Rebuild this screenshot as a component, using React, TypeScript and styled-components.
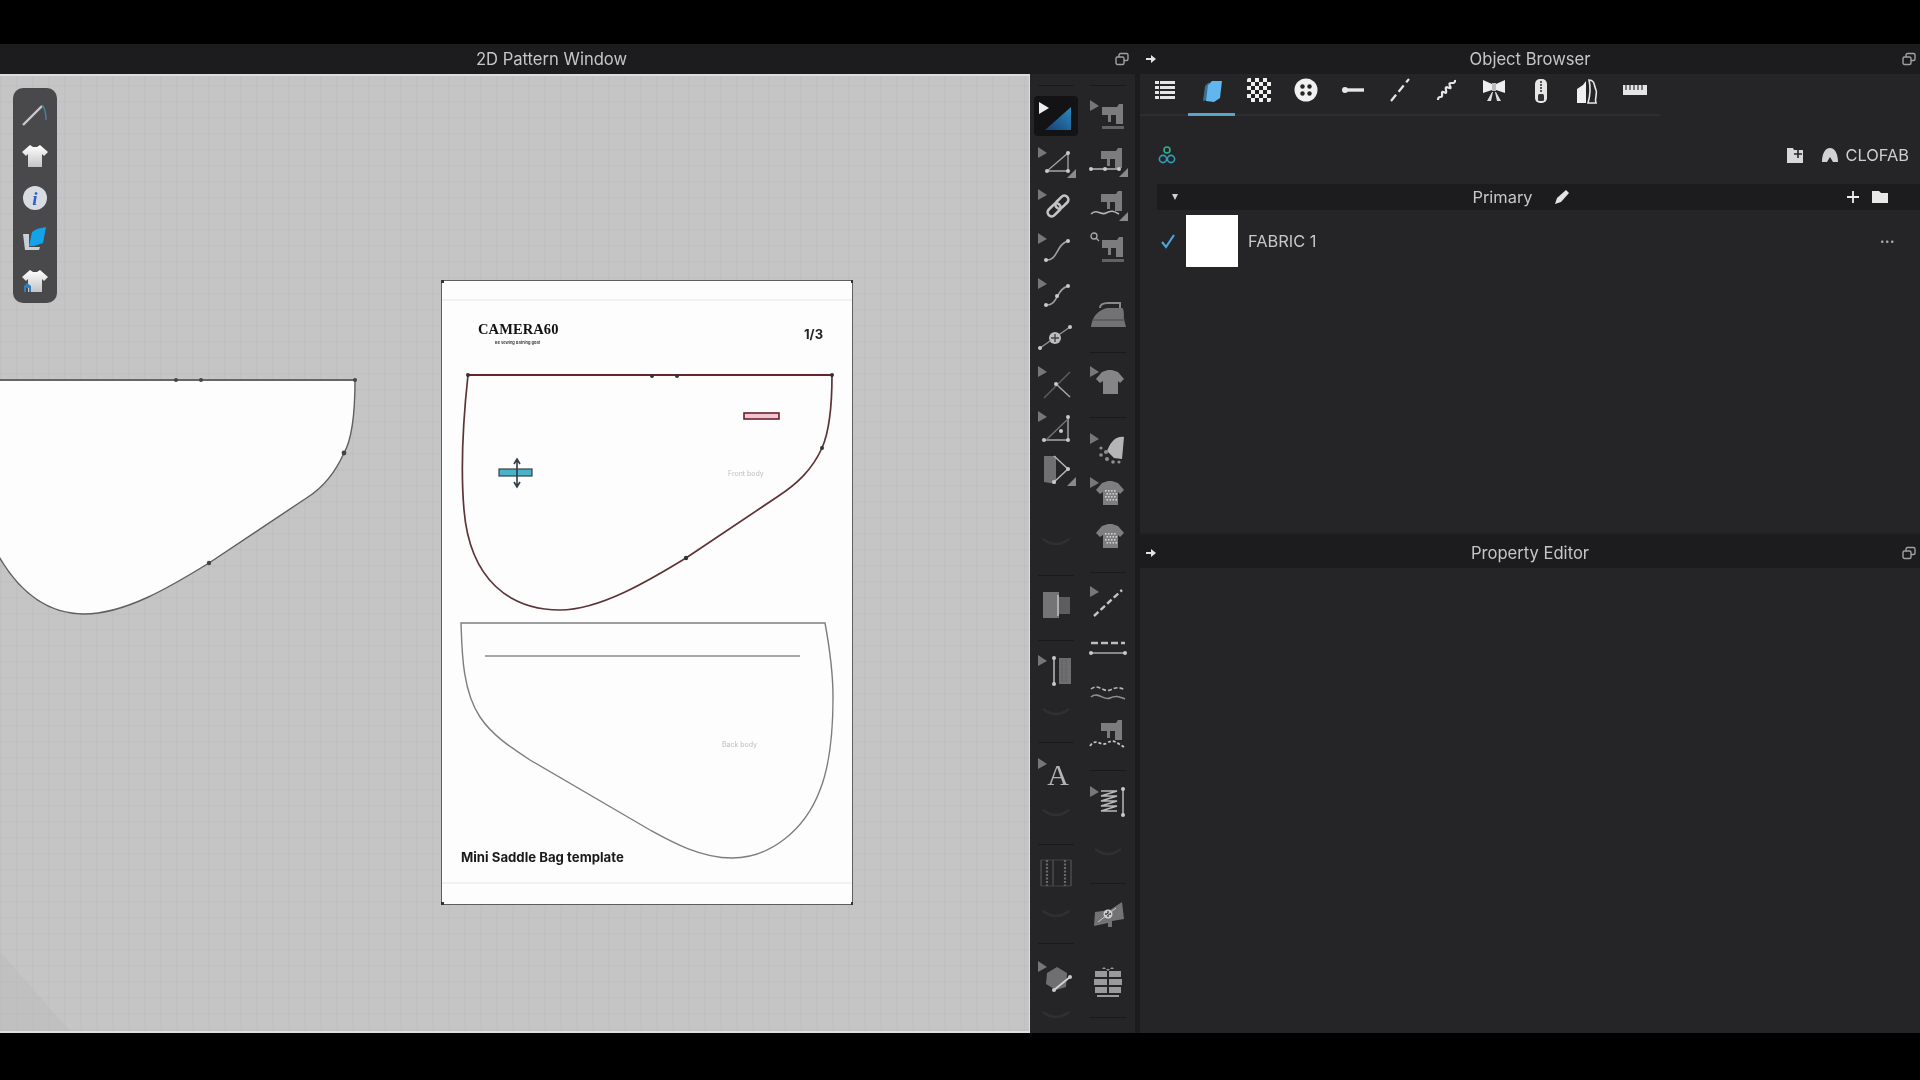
import React from "react";
import styled, { createGlobalStyle } from "styled-components";

const GlobalStyle = createGlobalStyle`
  html, body { margin: 0; padding: 0; background: #000; }
  body { font-family: Inter, "Liberation Sans", sans-serif; overflow: hidden; }
`;

const Frame = styled.div`
  width: 1920px;
  height: 1080px;
  display: flex;
  flex-direction: column;
  background: #000;
  filter: blur(0.45px);
`;
const TopBand = styled.div`
  height: 44px;
  flex: none;
`;
const BottomBand = styled.div`
  flex: 1;
`;
const Workspace = styled.div`
  height: 989px;
  flex: none;
  display: flex;
`;
const LeftWindow = styled.section`
  width: 1140px;
  flex: none;
  display: flex;
  flex-direction: column;
`;
const RightWindow = styled.section`
  flex: 1;
  display: flex;
  flex-direction: column;
  background: #252527;
`;
const TitleBar = styled.header`
  height: 30px;
  flex: none;
  display: flex;
  align-items: center;
  background: #1c1c1e;
  color: #c6c6c6;
  font-size: 16.6px;
`;
const TitleText = styled.div`
  flex: 1;
  text-align: center;
`;
const TitleCell = styled.div`
  flex: none;
  width: ${(p) => p.$w}px;
  display: flex;
  align-items: center;
  justify-content: center;
`;
const LeftBody = styled.div`
  flex: 1;
  display: flex;
  min-height: 0;
`;
const Canvas = styled.div`
  width: 1030px;
  flex: none;
  position: relative;
  overflow: hidden;
  background-color: #c5c5c5;
  background-image:
    repeating-linear-gradient(90deg, rgba(170, 170, 170, 0.13) 0 2px, transparent 2px 16px),
    repeating-linear-gradient(0deg, rgba(170, 170, 170, 0.13) 0 2px, transparent 2px 16px);
  border-top: 2px solid #dcdcdc;
  border-right: 1px solid #dedede;
  border-bottom: 2px solid #dedede;
  box-sizing: border-box;
`;
const SidePill = styled.nav`
  position: absolute;
  left: 13px;
  top: 12px;
  width: 44px;
  height: 215px;
  box-sizing: border-box;
  padding: 6px 0 0;
  display: flex;
  flex-direction: column;
  align-items: center;
  background: #49494b;
  border-radius: 10px;
`;
const PillIcon = styled.div`
  height: 41.5px;
  display: flex;
  align-items: center;
  justify-content: center;
`;
const Drawing = styled.svg`
  position: absolute;
  left: 0;
  top: -2px;
`;
const Paper = styled.div`
  position: absolute;
  left: 441px;
  top: 204px;
  width: 412px;
  height: 625px;
  background: #fdfdfd;
`;
const PaperDrawing = styled.svg`
  position: absolute;
  left: 0;
  top: 0;
`;
const PaperText = styled.div`
  position: absolute;
  left: ${(p) => p.$x}px;
  top: ${(p) => p.$y}px;
  white-space: nowrap;
  line-height: 1;
`;
const Brand = styled(PaperText)`
  font-family: "Liberation Serif", serif;
  font-weight: 700;
  font-size: 14.5px;
  letter-spacing: 0.1px;
  color: #111;
`;
const Tagline = styled(PaperText)`
  font-size: 4px;
  font-weight: 600;
  color: #333;
`;
const PageNo = styled(PaperText)`
  font-size: 13px;
  font-weight: 700;
  color: #222;
`;
const BodyLabel = styled(PaperText)`
  font-size: 7px;
  color: #bdbdbd;
`;
const TemplateTitle = styled(PaperText)`
  font-size: 13.2px;
  font-weight: 700;
  color: #1a1a1a;
`;
const Toolbar = styled.aside`
  flex: 1;
  display: flex;
  background: #252528;
  border-right: 5px solid #1b1b1d;
`;
const ToolColumn = styled.div`
  width: 52px;
  display: flex;
  flex-direction: column;
  align-items: center;
`;
const ToolCell = styled.div`
  width: 44px;
  height: 40px;
  flex: none;
  margin-top: ${(p) => p.$mt}px;
  background: ${(p) => (p.$active ? "#131315" : "transparent")};
  border-radius: 4px;
`;
const ToolRule = styled.div`
  width: 36px;
  height: 1px;
  flex: none;
  margin-top: ${(p) => p.$mt}px;
  background: #19191b;
`;
const PanelTop = styled.div`
  height: 461px;
  flex: none;
  display: flex;
  flex-direction: column;
  border-bottom: 2px solid #1f1f21;
  box-sizing: border-box;
`;
const TabStrip = styled.div`
  width: 520px;
  height: 42px;
  flex: none;
  box-sizing: border-box;
  padding-left: 1px;
  display: flex;
  border-bottom: 2px solid #2e2e31;
`;
const Tab = styled.div`
  width: 47px;
  height: 42px;
  flex: none;
  display: flex;
  justify-content: center;
  padding-top: 4px;
  box-sizing: border-box;
  border-bottom: 3px solid ${(p) => (p.$active ? "#57a6c8" : "transparent")};
`;
const LibraryRow = styled.div`
  height: 38px;
  margin-top: 20px;
  flex: none;
  display: flex;
  align-items: center;
  padding: 0 11px 0 16px;
  color: #cfcfcf;
  font-size: 16.4px;
`;
const LibrarySpacer = styled.div`
  flex: 1;
`;
const LibraryLabel = styled.span`
  margin-left: 6px;
`;
const LibraryGap = styled.div`
  width: 16px;
`;
const GroupRow = styled.div`
  height: 26px;
  margin: 10px 0 0 17px;
  flex: none;
  display: grid;
  grid-template-columns: 1fr auto 1fr;
  align-items: center;
  background: #1c1c1e;
  color: #c8c8c8;
  font-size: 16.4px;
`;
const GroupLeft = styled.div`
  padding-left: 12px;
  display: flex;
`;
const GroupCenter = styled.div`
  display: flex;
  align-items: center;
  gap: 20px;
  margin-right: 34px;
`;
const GroupRight = styled.div`
  display: flex;
  justify-content: flex-end;
  gap: 9px;
  padding-right: 31px;
`;
const FabricRow = styled.div`
  height: 52px;
  margin-top: 5px;
  flex: none;
  display: flex;
  align-items: center;
  padding: 0 25px 0 20px;
  color: #c8c8c8;
  font-size: 16.4px;
`;
const Swatch = styled.div`
  width: 52px;
  height: 52px;
  margin: 0 10px 0 10px;
  background: #fff;
`;
const MoreDots = styled.div`
  margin-left: auto;
  font-size: 8px;
  line-height: 1;
  letter-spacing: 0.5px;
  color: #a8a8a8;
`;
const PropertyTitle = styled(TitleBar)`
  height: 33px;
  padding-top: 3px;
  box-sizing: border-box;
`;

const G = "#8d8d8d";
const L = "#c9c9c9";

const Flag = () => <polygon points="4,4 4,15 13,10" fill="#77777a" />;
const Corner = () => <polygon points="42,26 42,35 33,35" fill="#8a8a8a" />;
const Dot = ({ x, y, r = 2 }: { x: number; y: number; r?: number }) => <circle cx={x} cy={y} r={r} fill={L} />;
const Sewing = ({ dx = 0, dy = 0 }: { dx?: number; dy?: number }) => (
  <g transform={`translate(${dx} ${dy})`}>
    <path d="M16 11H31L33 8H37V28H30V19H25V26H22V19H16Z" fill="#7c7c7e" />
  </g>
);
const Shirt = ({ fill = "#858587" }: { fill?: string }) => (
  <path d="M16 10L22 8 26 8 32 10 38 17 34 21 32 19V32H17V19L14 21 10 17Z" fill={fill} />
);
const Checks = () => (
  <g fill="#d0d0d0">
    {[0, 1, 2, 3].map((r) =>
      [0, 1, 2, 3].map((c) => <rect key={`${r}${c}`} x={19 + c * 3 + (r % 2) * 1.5} y={17 + r * 3} width="1.6" height="1.6" />)
    )}
  </g>
);
const Chevron = () => <path d="M9 16Q22 26 35 16" fill="none" stroke="#303033" strokeWidth="2.5" />;

const toolIcons: Record<string, React.ReactNode> = {
  active: (
    <>
      <defs>
        <linearGradient id="blueTri" x1="0" y1="1" x2="1" y2="0">
          <stop offset="0" stopColor="#173f73" />
          <stop offset="1" stopColor="#2a8bc0" />
        </linearGradient>
      </defs>
      <polygon points="11,34 37,11 37,34" fill="url(#blueTri)" />
      <polygon points="5,6 5,18 15,12" fill="#eee" />
    </>
  ),
  triangle: (
    <>
      <Flag />
      <path d="M13 28H34V10Z" fill="none" stroke="#a5a5a5" strokeWidth="1.3" />
      <Dot x={13} y={28} /><Dot x={34} y={28} /><Dot x={34} y={10} />
      <Corner />
    </>
  ),
  link: (
    <>
      <Flag />
      <g fill="none" stroke="#c4c4c4" strokeWidth="2.6" transform="rotate(-45 24 21)">
        <rect x="11" y="17" width="15" height="8" rx="4" />
        <rect x="22" y="17" width="15" height="8" rx="4" />
      </g>
    </>
  ),
  curve: (
    <>
      <Flag />
      <path d="M12 31C24 32 22 15 34 12" fill="none" stroke="#a0a0a0" strokeWidth="1.6" />
      <Dot x={12} y={31} /><Dot x={34} y={12} />
    </>
  ),
  curveMid: (
    <>
      <Flag />
      <path d="M12 31C24 32 22 15 34 12" fill="none" stroke="#a0a0a0" strokeWidth="1.6" />
      <Dot x={12} y={31} /><Dot x={34} y={12} /><Dot x={23} y={22} />
    </>
  ),
  addPoint: (
    <>
      <path d="M6 30L36 9" stroke="#8f8f8f" strokeWidth="1.5" />
      <Dot x={6} y={30} /><Dot x={36} y={9} />
      <circle cx="21" cy="20" r="6" fill="#bdbdbd" />
      <path d="M21 16V24M17 20H25" stroke="#444" strokeWidth="1.4" />
    </>
  ),
  cross: (
    <>
      <Flag />
      <path d="M10 36L36 10" stroke="#5e5e60" strokeWidth="1.5" />
      <path d="M22 22L36 35" stroke="#a8a8a8" strokeWidth="1.5" />
      <Dot x={22} y={22} />
    </>
  ),
  angle: (
    <>
      <Flag />
      <path d="M10 33H34V10" fill="none" stroke="#a8a8a8" strokeWidth="1.4" />
      <path d="M12 33L34 12" stroke="#777" strokeWidth="1.3" />
      <Dot x={10} y={33} /><Dot x={34} y={33} /><Dot x={34} y={10} /><Dot x={27} y={24} />
    </>
  ),
  door: (
    <>
      <polygon points="10,5 22,5 22,33 10,31" fill="#707072" />
      <path d="M20 5L34 18 20 31" fill="none" stroke="#b5b5b5" strokeWidth="1.5" />
      <Dot x={34} y={18} /><Dot x={20} y={31} />
      <Corner />
    </>
  ),
  chevron: <Chevron />,
  bracket: (
    <>
      <rect x="9" y="6" width="16" height="26" fill="#747476" />
      <rect x="25" y="11" width="11" height="17" fill="#5d5d5f" />
      <path d="M24 9V30" stroke="#c8c8c8" strokeWidth="1.4" />
    </>
  ),
  ruler: (
    <>
      <Flag />
      <path d="M20 7V33" stroke="#bcbcbc" strokeWidth="1.5" />
      <Dot x={20} y={7} /><Dot x={20} y={33} />
      <rect x="25" y="7" width="12" height="26" fill="#6e6e70" />
      <path d="M28 9V31M32 9V31" stroke="#555" strokeWidth="1" strokeDasharray="1 1" />
    </>
  ),
  letter: (
    <>
      <Flag />
      <text x="24" y="31" textAnchor="middle" fontFamily="Liberation Serif, serif" fontSize="30" fill="#b4b4b4">A</text>
    </>
  ),
  grid: (
    <g stroke="#4d4d4f" strokeWidth="1.4">
      <path d="M7 6V32M19 6V32M37 6V32" />
      <path d="M13 6V32M31 6V32" strokeDasharray="2 1.5" stroke="#6a6a6c" strokeWidth="2.2" />
      <path d="M7 6H37M7 32H37" strokeWidth="0.8" />
    </g>
  ),
  shapeLine: (
    <>
      <Flag />
      <polygon points="13,16 23,10 33,16 32,30 22,33 12,27" fill="#6f6f71" />
      <path d="M20 33L36 20" stroke="#d4d4d4" strokeWidth="1.8" />
      <Dot x={20} y={33} /><Dot x={36} y={20} />
    </>
  ),
  machine: (
    <>
      <Flag />
      <Sewing />
      <rect x="16" y="30" width="22" height="3" fill="#626264" />
    </>
  ),
  machineLine: (
    <>
      <Sewing dx={-1} dy={-2} />
      <path d="M5 27H33" stroke="#c4c4c4" strokeWidth="1.4" />
      <Dot x={5} y={27} /><Dot x={19} y={27} /><Dot x={33} y={27} />
      <Corner />
    </>
  ),
  machineWave: (
    <>
      <Sewing dx={-1} dy={-3} />
      <path d="M5 28C11 22 15 30 20 27S28 25 33 28" fill="none" stroke="#b4b4b4" strokeWidth="1.6" />
      <Corner />
    </>
  ),
  machineFind: (
    <>
      <circle cx="8" cy="7" r="3" fill="none" stroke="#aaa" strokeWidth="1.3" />
      <path d="M10 9L13 12" stroke="#aaa" strokeWidth="1.3" />
      <Sewing />
      <rect x="16" y="30" width="22" height="3" fill="#626264" />
    </>
  ),
  iron: (
    <>
      <path d="M5 32C6 22 12 15 21 13H36C38 13 38 20 38 24L40 32Z" fill="#727274" />
      <path d="M14 13C14 9 18 8 22 8H34V13" fill="none" stroke="#88888a" strokeWidth="2" />
      <path d="M6 25H39" stroke="#49494b" strokeWidth="1.2" />
    </>
  ),
  shirtFlag: (
    <>
      <Flag />
      <Shirt />
    </>
  ),
  sleeve: (
    <>
      <Flag />
      <path d="M21 22C25 12 30 7 38 8L36 30 28 29Z" fill="#b5b5b5" />
      <g fill="#8e8e90">
        <circle cx="15" cy="19" r="1.6" /><circle cx="20" cy="23" r="2" /><circle cx="15" cy="26" r="1.8" />
        <circle cx="21" cy="30" r="2" /><circle cx="27" cy="33" r="1.8" /><circle cx="33" cy="33" r="1.6" />
      </g>
    </>
  ),
  checkFlag: (
    <>
      <Flag />
      <Shirt fill="#7e7e80" />
      <Checks />
    </>
  ),
  check: (
    <>
      <Shirt fill="#7e7e80" />
      <Checks />
    </>
  ),
  dashDiag: (
    <>
      <Flag />
      <path d="M8 34L36 8" stroke="#c4c4c4" strokeWidth="2.4" strokeDasharray="6 3" />
    </>
  ),
  dashLine: (
    <>
      <path d="M5 15H39" stroke="#bdbdbd" strokeWidth="2.6" strokeDasharray="7 3" />
      <path d="M5 25H39" stroke="#a8a8a8" strokeWidth="1.3" />
      <Dot x={5} y={25} /><Dot x={39} y={25} />
    </>
  ),
  waves: (
    <>
      <path d="M5 16C12 10 18 20 24 17S34 14 39 17" fill="none" stroke="#b5b5b5" strokeWidth="1.6" strokeDasharray="4 2" />
      <path d="M5 24C12 18 18 28 24 25S34 24 39 26" fill="none" stroke="#8f8f8f" strokeWidth="1.6" />
    </>
  ),
  machineDash: (
    <>
      <Sewing dx={-1} dy={-3} />
      <path d="M4 31C10 22 15 32 21 28S30 27 38 32" fill="none" stroke="#c2c2c2" strokeWidth="1.8" strokeDasharray="3 2" />
    </>
  ),
  elastic: (
    <>
      <Flag />
      <path d="M15 9H31L15 14H31L15 19H31L15 24H31L15 29H31" fill="none" stroke="#b8b8b8" strokeWidth="1.7" />
      <path d="M37 7V33" stroke="#b8b8b8" strokeWidth="1.5" />
      <Dot x={37} y={7} /><Dot x={37} y={33} />
    </>
  ),
  machinePlus: (
    <>
      <path d="M9 17L24 15 30 11 36 7 38 24 26 26V32H22V28L8 31Z" fill="#737375" />
      <circle cx="22" cy="19" r="4.5" fill="#d0d0d0" />
      <path d="M22 16V22M19 19H25" stroke="#333" strokeWidth="1.3" />
      <path d="M12 27L30 13" stroke="#c8c8c8" strokeWidth="1" />
    </>
  ),
  puffer: (
    <g fill="#9a9a9c">
      <path d="M18 5L22 9 26 5 28 7H16Z" />
      <rect x="9" y="9" width="12" height="6" />
      <rect x="23" y="9" width="12" height="6" />
      <rect x="8" y="17" width="13" height="6" />
      <rect x="23" y="17" width="13" height="6" />
      <rect x="9" y="25" width="12" height="6" />
      <rect x="23" y="25" width="12" height="6" />
      <rect x="11" y="33" width="22" height="2" />
    </g>
  ),
};

type ToolItem = { y: number; icon?: string; active?: boolean };

const leftTools: ToolItem[] = [
  { y: 85 }, { y: 116, icon: "active", active: true }, { y: 163, icon: "triangle" }, { y: 205, icon: "link" },
  { y: 249, icon: "curve" }, { y: 294, icon: "curveMid" }, { y: 338, icon: "addPoint" }, { y: 382, icon: "cross" },
  { y: 427, icon: "angle" }, { y: 471, icon: "door" }, { y: 543, icon: "chevron" }, { y: 575 },
  { y: 606, icon: "bracket" }, { y: 640 }, { y: 671, icon: "ruler" }, { y: 713, icon: "chevron" }, { y: 742 },
  { y: 774, icon: "letter" }, { y: 814, icon: "chevron" }, { y: 844 }, { y: 874, icon: "grid" },
  { y: 915, icon: "chevron" }, { y: 943 }, { y: 977, icon: "shapeLine" }, { y: 1016, icon: "chevron" },
];

const rightTools: ToolItem[] = [
  { y: 85 }, { y: 116, icon: "machine" }, { y: 162, icon: "machineLine" }, { y: 206, icon: "machineWave" },
  { y: 249, icon: "machineFind" }, { y: 315, icon: "iron" }, { y: 352 }, { y: 382, icon: "shirtFlag" }, { y: 417 },
  { y: 449, icon: "sleeve" }, { y: 493, icon: "checkFlag" }, { y: 536, icon: "check" }, { y: 572 },
  { y: 602, icon: "dashDiag" }, { y: 648, icon: "dashLine" }, { y: 693, icon: "waves" }, { y: 735, icon: "machineDash" },
  { y: 770 }, { y: 802, icon: "elastic" }, { y: 853, icon: "chevron" }, { y: 883 }, { y: 915, icon: "machinePlus" },
  { y: 982, icon: "puffer" }, { y: 1017 },
];

const ToolStack = ({ items }: { items: ToolItem[] }) => {
  let bottom = 74;
  return (
    <ToolColumn>
      {items.map((item) => {
        const h = item.icon ? 40 : 1;
        const top = item.icon ? item.y - 20 : item.y;
        const mt = top - bottom;
        bottom = top + h;
        if (!item.icon) return <ToolRule key={item.y} $mt={mt} />;
        return (
          <ToolCell key={item.y} $mt={mt} $active={item.active}>
            <svg width="44" height="40" viewBox="0 0 44 40">{toolIcons[item.icon]}</svg>
          </ToolCell>
        );
      })}
    </ToolColumn>
  );
};

const RestoreIcon = () => (
  <svg width="14" height="14" viewBox="0 0 14 14" fill="none" stroke="#a0a0a0" strokeWidth="1.4">
    <rect x="4" y="1.5" width="9" height="7" rx="1.5" />
    <rect x="1" y="5" width="8" height="7.5" rx="1.5" fill="#1c1c1e" />
  </svg>
);
const ArrowIcon = () => (
  <svg width="12" height="12" viewBox="0 0 12 12">
    <path d="M1 5H6V2L11 6 6 10V7H1Z" fill="#e4e4e4" />
  </svg>
);

const PillShirt = ({ badge }: { badge?: boolean }) => (
  <svg width="28" height="26" viewBox="0 0 28 26">
    <defs>
      <linearGradient id="shirtGrad" x1="0" y1="0" x2="0" y2="1">
        <stop offset="0" stopColor="#fff" />
        <stop offset="1" stopColor="#c4c4c4" />
      </linearGradient>
    </defs>
    <path d="M9 2L12 4H16L19 2 27 9 23 13 21 11V24H7V11L5 13 1 9Z" fill="url(#shirtGrad)" />
    {badge && <path d="M3 24V18L6 15 10 18V24H8V20H5V24Z" fill="#2d7fbd" />}
  </svg>
);

const pillIcons = [
  <svg key="needle" width="28" height="26" viewBox="0 0 28 26">
    <path d="M2 23L21 4" stroke="#c9c9c9" strokeWidth="2.4" />
    <path d="M21 3C24 6 25 12 25 18" fill="none" stroke="#3f87ab" strokeWidth="1.4" />
  </svg>,
  <PillShirt key="shirt" />,
  <svg key="info" width="26" height="26" viewBox="0 0 26 26">
    <circle cx="13" cy="13" r="12" fill="#d8dce2" />
    <text x="13" y="20" textAnchor="middle" fontFamily="Liberation Serif, serif" fontStyle="italic" fontWeight="700" fontSize="19" fill="#2f62c8">i</text>
  </svg>,
  <svg key="fabric" width="28" height="26" viewBox="0 0 28 26">
    <path d="M2 8H8V21H19L18 24H4Z" fill="#c8d0d6" />
    <path d="M8 20L11 6 16 3 25 1 22 17 13 20Z" fill="#12a3ea" />
  </svg>,
  <PillShirt key="shirtBadge" badge />,
];

const tabIcons = [
  <svg key="list" width="24" height="24" viewBox="0 0 24 24">
    <g fill="#e4e4e4">
      {[3, 8, 13, 18].map((y) => (
        <React.Fragment key={y}>
          <rect x="2" y={y} width="4" height="3" />
          <rect x="7" y={y} width="15" height="3" />
        </React.Fragment>
      ))}
    </g>
  </svg>,
  <svg key="fabric" width="26" height="26" viewBox="0 0 26 26">
    <path d="M4 23L6 8 10 4 8 22Z" fill="#3c6f8d" />
    <path d="M7 23L9 7 13 3 23 3 21 20 15 24Z" fill="#62b6ee" />
  </svg>,
  <svg key="checker" width="24" height="24" viewBox="0 0 24 24">
    <rect width="24" height="24" rx="2" fill="#eee" />
    {[0, 1, 2, 3, 4, 5].map((r) =>
      [0, 1, 2, 3, 4, 5].map((c) =>
        (r + c) % 2 ? <rect key={`${r}-${c}`} x={c * 4} y={r * 4} width="4" height="4" fill="#222" /> : null
      )
    )}
  </svg>,
  <svg key="button" width="24" height="24" viewBox="0 0 24 24">
    <circle cx="12" cy="12" r="11.5" fill="#f0f0f0" />
    <circle cx="8.5" cy="8.5" r="2.2" fill="#252527" /><circle cx="15.5" cy="8.5" r="2.2" fill="#252527" />
    <circle cx="8.5" cy="15.5" r="2.2" fill="#252527" /><circle cx="15.5" cy="15.5" r="2.2" fill="#252527" />
  </svg>,
  <svg key="pin" width="24" height="24" viewBox="0 0 24 24">
    <path d="M2 12H23" stroke="#e6e6e6" strokeWidth="3.4" />
    <circle cx="4" cy="12" r="3" fill="#e6e6e6" />
  </svg>,
  <svg key="dash" width="24" height="24" viewBox="0 0 24 24">
    <path d="M3 23L21 1" stroke="#e6e6e6" strokeWidth="2.2" strokeDasharray="8 4" />
  </svg>,
  <svg key="spring" width="24" height="24" viewBox="0 0 24 24">
    <path d="M3 22C3 16 8 22 7 16S13 19 11 12 18 14 15 8 21 8 20 2" fill="none" stroke="#e6e6e6" strokeWidth="2.2" />
  </svg>,
  <svg key="bow" width="24" height="24" viewBox="0 0 24 24">
    <path d="M1 2L10 6V12L1 15ZM23 2L14 6V12L23 15Z" fill="#eee" />
    <rect x="10" y="5" width="4" height="8" fill="#bbb" />
    <path d="M5 23L10 14H11L9 23ZM19 23L14 14H13L15 23Z" fill="#ddd" />
  </svg>,
  <svg key="zip" width="20" height="26" viewBox="0 0 20 26">
    <rect x="4" y="1" width="12" height="24" rx="5" fill="#e6e6e6" />
    <path d="M10 3V14" stroke="#333" strokeWidth="1.6" strokeDasharray="2 1" />
    <rect x="7" y="16" width="6" height="7" rx="1.5" fill="#333" />
  </svg>,
  <svg key="pieces" width="26" height="26" viewBox="0 0 26 26">
    <path d="M2 25V11L8 7 11 3V25Z" fill="#f0f0f0" />
    <path d="M14 2C20 2 19 8 21 12S19 20 21 25H13C15 18 16 10 14 2Z" fill="none" stroke="#e8e8e8" strokeWidth="1.6" />
  </svg>,
  <svg key="ruler" width="26" height="24" viewBox="0 0 26 24">
    <rect x="1" y="7" width="24" height="10" fill="#e4e4e4" />
    <path d="M4 7V12M8 7V12M12 7V12M16 7V12M20 7V12" stroke="#333" strokeWidth="1.2" />
  </svg>,
];

export default function App() {
  return (
    <>
      <GlobalStyle />
      <Frame>
        <TopBand />
        <Workspace>
          <LeftWindow>
            <TitleBar>
              <TitleText>2D Pattern Window</TitleText>
              <TitleCell $w={37}><RestoreIcon /></TitleCell>
            </TitleBar>
            <LeftBody>
              <Canvas>
                <Drawing width="1030" height="959" viewBox="0 74 1030 959">
                  <path d="M0 952L72 1033H0Z" fill="#bcbcbc" opacity="0.55" />
                  <path
                    d="M-2 380H355C355 415 351 441 344 453C335 473 322 488 308 497L209 563C170 587 125 614 84 614C45 614 18 590 -2 555Z"
                    fill="#fdfdfd"
                    stroke="#5f5f5f"
                    strokeWidth="1.4"
                  />
                  <path d="M0 380H355" stroke="#666" strokeWidth="2" />
                  <g fill="#444">
                    <circle cx="176" cy="380" r="2" /><circle cx="201" cy="380" r="2" /><circle cx="355" cy="380" r="2" />
                    <circle cx="344" cy="453" r="2.4" /><circle cx="209" cy="563" r="2.2" />
                  </g>
                </Drawing>
                <SidePill>
                  {pillIcons.map((icon, i) => (
                    <PillIcon key={i}>{icon}</PillIcon>
                  ))}
                </SidePill>
                <Paper>
                  <PaperDrawing width="412" height="625" viewBox="441 280 412 625">
                    <path d="M441 300H853M441 883H853" stroke="#e6e6e6" strokeWidth="1.2" />
                    <path d="M441 280H853V905H441Z" fill="none" stroke="#5e5e5e" strokeWidth="2" />
                    <g fill="#333">
                      <rect x="440" y="279" width="4" height="4" /><rect x="851" y="279" width="4" height="4" />
                      <rect x="440" y="902" width="4" height="4" /><rect x="851" y="902" width="4" height="4" />
                    </g>
                    <path
                      d="M468 375H832C832 405 830 430 822 448C812 470 797 484 777 497L686 558C650 580 600 610 560 610C510 610 470 580 464 510C461 475 462 430 468 375Z"
                      fill="none"
                      stroke="#5e3336"
                      strokeWidth="1.7"
                    />
                    <path d="M468 375H832" stroke="#6b2328" strokeWidth="2" />
                    <g fill="#333">
                      <circle cx="468" cy="375" r="2" /><circle cx="832" cy="375" r="2" />
                      <circle cx="652" cy="376" r="2" /><circle cx="677" cy="376" r="2" />
                      <circle cx="822" cy="448" r="2" /><circle cx="686" cy="558" r="2.2" />
                    </g>
                    <rect x="744" y="413" width="35" height="6" fill="#f0c6cd" stroke="#6b1f33" strokeWidth="1.6" />
                    <rect x="499" y="469" width="33" height="7" fill="#49b3c9" stroke="#3c3c46" strokeWidth="1.2" />
                    <path d="M517 461V485M514 464L517 459 520 464M514 482L517 487 520 482" fill="none" stroke="#2f3c44" strokeWidth="1.6" />
                    <path
                      d="M461 623H825C830 650 833 670 833 697C833 720 832 760 820 790C805 830 770 858 732 858C700 858 670 841 650 830L530 760C510 747 492 735 480 717C462 690 462 650 461 623Z"
                      fill="none"
                      stroke="#7d7d7d"
                      strokeWidth="1.4"
                    />
                    <path d="M485 656H800" stroke="#8a8a8a" strokeWidth="1.3" />
                  </PaperDrawing>
                  <Brand $x={37} $y={42}>CAMERA60</Brand>
                  <Tagline $x={54} $y={61}>Be sewing bathing goat</Tagline>
                  <PageNo $x={363} $y={48}>1/3</PageNo>
                  <BodyLabel $x={287} $y={190}>Front body</BodyLabel>
                  <BodyLabel $x={281} $y={461}>Back body</BodyLabel>
                  <TemplateTitle $x={20} $y={571}>Mini Saddle Bag template</TemplateTitle>
                </Paper>
              </Canvas>
              <Toolbar>
                <ToolStack items={leftTools} />
                <ToolStack items={rightTools} />
              </Toolbar>
            </LeftBody>
          </LeftWindow>
          <RightWindow>
            <TitleBar>
              <TitleCell $w={22}><ArrowIcon /></TitleCell>
              <TitleText>Object Browser</TitleText>
              <TitleCell $w={22}><RestoreIcon /></TitleCell>
            </TitleBar>
            <PanelTop>
              <TabStrip>
                {tabIcons.map((icon, i) => (
                  <Tab key={i} $active={i === 1}>{icon}</Tab>
                ))}
              </TabStrip>
              <LibraryRow>
                <svg width="22" height="22" viewBox="0 0 22 22" fill="none" strokeWidth="1.6">
                  <circle cx="11" cy="6" r="3" stroke="#2fb08d" />
                  <circle cx="7" cy="15" r="3.6" stroke="#2f9fb8" />
                  <circle cx="15" cy="15" r="3.6" stroke="#2f9fb8" />
                </svg>
                <LibrarySpacer />
                <svg width="20" height="20" viewBox="0 0 20 20">
                  <path d="M2 3H8L9 5H18V18H2Z" fill="#d8d8d8" />
                  <path d="M13 5V13M9 9H17" stroke="#252527" strokeWidth="1.6" />
                </svg>
                <LibraryGap />
                <svg width="18" height="18" viewBox="0 0 18 18">
                  <path d="M1 16C1 8 4 2 9 2S17 8 17 16H12L9 11 6 16Z" fill="#d2d2d2" />
                </svg>
                <LibraryLabel>CLOFAB</LibraryLabel>
              </LibraryRow>
              <GroupRow>
                <GroupLeft>
                  <svg width="12" height="12" viewBox="0 0 12 12">
                    <path d="M3 3H9L6 9Z" fill="#d0d0d0" />
                  </svg>
                </GroupLeft>
                <GroupCenter>
                  Primary
                  <svg width="18" height="18" viewBox="0 0 18 18">
                    <path d="M2 16L4 10 13 2 16 5 8 14Z" fill="#e4e4e4" />
                  </svg>
                </GroupCenter>
                <GroupRight>
                  <svg width="18" height="18" viewBox="0 0 18 18">
                    <path d="M9 3V15M3 9H15" stroke="#eee" strokeWidth="1.8" />
                  </svg>
                  <svg width="18" height="18" viewBox="0 0 18 18">
                    <path d="M1 3H8L10 5H17V15H1Z" fill="#e8e8e8" />
                  </svg>
                </GroupRight>
              </GroupRow>
              <FabricRow>
                <svg width="16" height="16" viewBox="0 0 16 16">
                  <path d="M2 9L6 14 14 2" fill="none" stroke="#4aa7dd" strokeWidth="2.2" />
                </svg>
                <Swatch />
                FABRIC 1
                <MoreDots>•••</MoreDots>
              </FabricRow>
            </PanelTop>
            <PropertyTitle>
              <TitleCell $w={22}><ArrowIcon /></TitleCell>
              <TitleText>Property Editor</TitleText>
              <TitleCell $w={22}><RestoreIcon /></TitleCell>
            </PropertyTitle>
          </RightWindow>
        </Workspace>
        <BottomBand />
      </Frame>
    </>
  );
}
